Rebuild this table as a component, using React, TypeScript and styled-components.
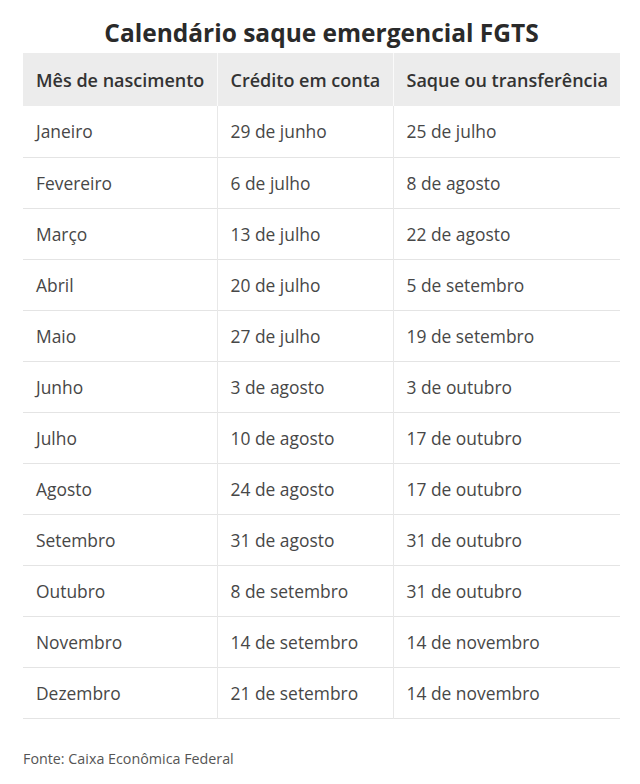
import React from 'react';
import styled, {createGlobalStyle} from 'styled-components';

const GlobalStyle = createGlobalStyle`
  body {
    margin: 0;
    background: #fff;
    font-family: "Open Sans", "Liberation Sans", sans-serif;
  }
`

const rows = [
    ['Janeiro', '29 de junho', '25 de julho'],
    ['Fevereiro', '6 de julho', '8 de agosto'],
    ['Março', '13 de julho', '22 de agosto'],
    ['Abril', '20 de julho', '5 de setembro'],
    ['Maio', '27 de julho', '19 de setembro'],
    ['Junho', '3 de agosto', '3 de outubro'],
    ['Julho', '10 de agosto', '17 de outubro'],
    ['Agosto', '24 de agosto', '17 de outubro'],
    ['Setembro', '31 de agosto', '31 de outubro'],
    ['Outubro', '8 de setembro', '31 de outubro'],
    ['Novembro', '14 de setembro', '14 de novembro'],
    ['Dezembro', '21 de setembro', '14 de novembro'],
];

const App = () => {
    return (
        <>
            <GlobalStyle/>
            <Wrapper>
                <Title>Calendário saque emergencial FGTS</Title>
                <Table>
                    <colgroup>
                        <col width={194}/>
                        <col width={176}/>
                        <col width={227}/>
                    </colgroup>
                    <thead>
                    <tr>
                        <HeadCell>Mês de nascimento</HeadCell>
                        <HeadCell>Crédito em conta</HeadCell>
                        <HeadCell>Saque ou transferência</HeadCell>
                    </tr>
                    </thead>
                    <tbody>
                    {rows.map(r => <Row key={r[0]}>
                        {r.map((c, i) => <Cell key={i}>{c}</Cell>)}
                    </Row>)}
                    </tbody>
                </Table>
                <Source>Fonte: Caixa Econômica Federal</Source>
            </Wrapper>
        </>
    );
};
export default App

const Wrapper = styled.main`
  width: 597px;
  margin-left: 23px;
  display: flex;
  flex-direction: column;
`
const Title = styled.h1`
  margin: 0;
  height: 53px;
  padding-top: 18px;
  box-sizing: border-box;
  text-align: center;
  font-size: 24.5px;
  line-height: 30px;
  font-weight: 700;
  color: #2a2a2a;
  white-space: nowrap;
`
const Table = styled.table`
  width: 597px;
  border-collapse: collapse;
  table-layout: fixed;
`
const HeadCell = styled.th`
  height: 53px;
  padding: 0 13px;
  background: #ececec;
  text-align: left;
  font-size: 18px;
  font-weight: 600;
  color: #333;
  white-space: nowrap;
  border-right: 1px solid #fafafa;

  &:last-child {
    border-right: none;
  }
`
const Row = styled.tr`
  height: 51px;
  border-bottom: 1px solid #e4e4e4;
`
const Cell = styled.td`
  padding: 0 13px;
  font-size: 17.4px;
  color: #474747;
  white-space: nowrap;
  border-right: 1px solid #e8e8e8;

  &:last-child {
    border-right: none;
  }
`
const Source = styled.p`
  margin: 30px 0 0;
  font-size: 14.3px;
  line-height: 20px;
  color: #555;
`
